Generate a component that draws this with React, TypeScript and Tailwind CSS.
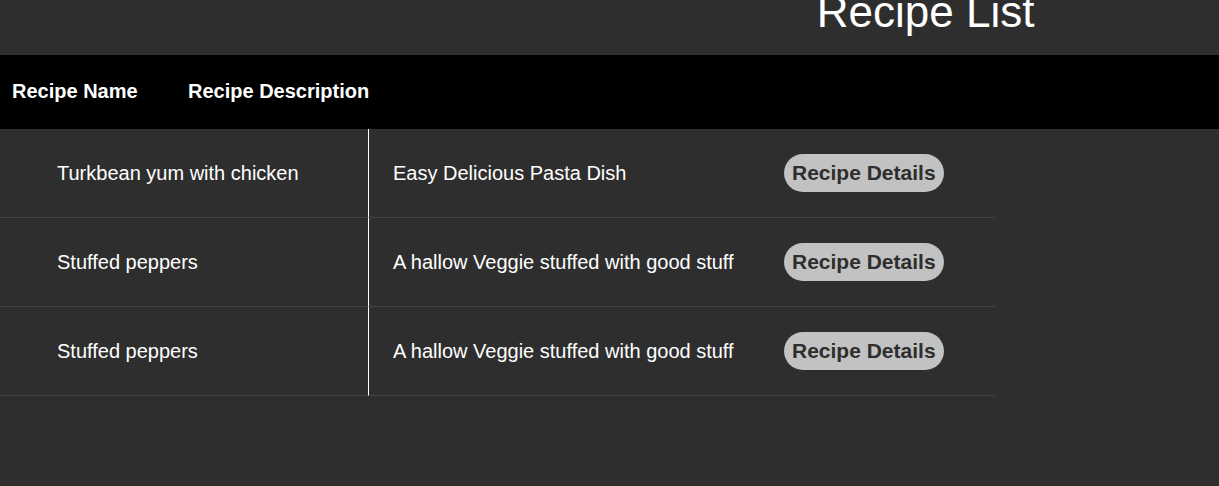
type Recipe = {
  id: number;
  name: string;
  description: string;
};

const recipes: Recipe[] = [
  { id: 1, name: "Turkbean yum with chicken", description: "Easy Delicious Pasta Dish" },
  { id: 2, name: "Stuffed peppers", description: "A hallow Veggie stuffed with good stuff" },
  { id: 3, name: "Stuffed peppers", description: "A hallow Veggie stuffed with good stuff" },
];

function RecipeRow({ recipe }: { recipe: Recipe }) {
  return (
    <tr className="flex h-[89px] items-stretch">
      <td className="flex w-[369px] shrink-0 items-center border-r border-b border-r-white border-b-[#444444] pl-[57px]">
        {recipe.name}
      </td>
      <td className="flex w-[391px] shrink-0 items-center border-b border-[#444444] pl-6">
        {recipe.description}
      </td>
      <td className="flex grow items-center border-b border-[#444444] pl-6">
        <button
          type="button"
          className="h-[38px] rounded-full bg-[#c2c2c2] px-2 text-[21px] font-bold whitespace-nowrap text-[#2e2e2e]"
        >
          Recipe Details
        </button>
      </td>
    </tr>
  );
}

export default function App() {
  return (
    <main className="min-h-screen overflow-x-hidden bg-[#2e2e2e] font-['Liberation_Sans',Arial,sans-serif] text-xl text-white">
      <h1 className="pb-[31px] pl-[67%] text-[44px] leading-6 whitespace-nowrap">Recipe List</h1>
      <table className="block w-full">
        <thead className="block bg-black">
          <tr className="flex h-[74px] items-center pb-0.5 text-left">
            <th scope="col" className="w-44 pl-3">
              Recipe Name
            </th>
            <th scope="col" className="pl-3">
              Recipe Description
            </th>
          </tr>
        </thead>
        <tbody className="block w-[995px]">
          {recipes.map((recipe) => (
            <RecipeRow key={recipe.id} recipe={recipe} />
          ))}
        </tbody>
      </table>
    </main>
  );
}
